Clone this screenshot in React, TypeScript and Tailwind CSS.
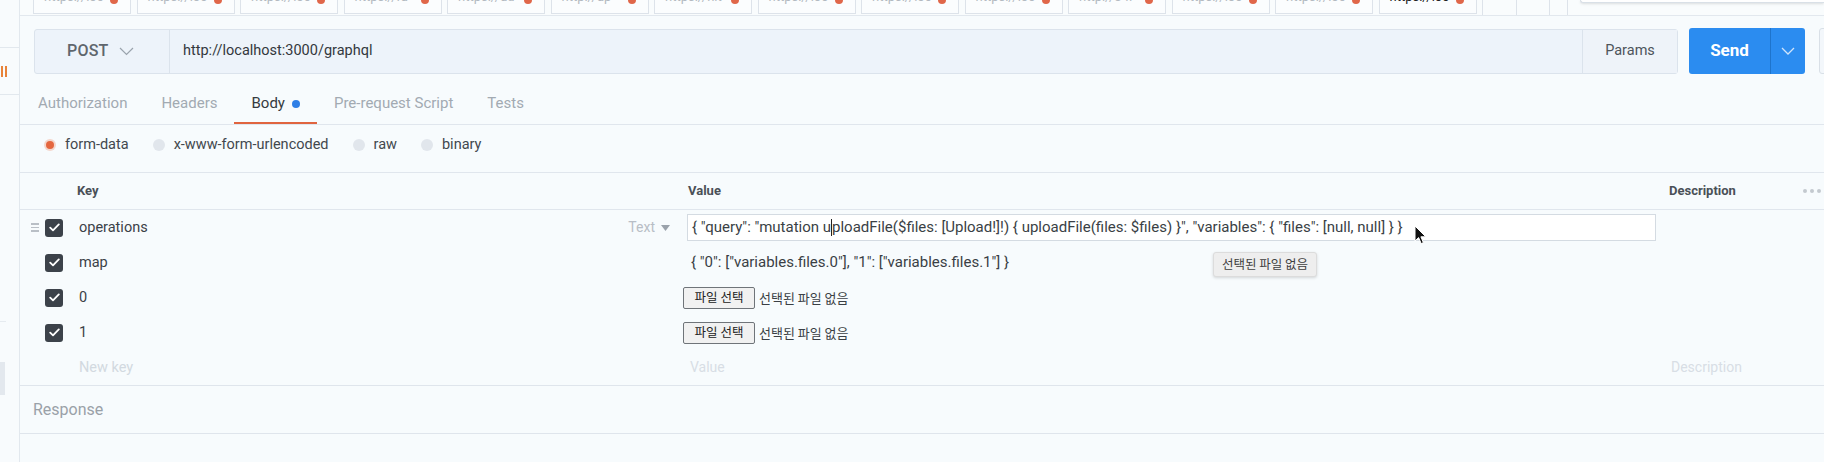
import React from "react";

const tabs = [
  "https://loc",
  "https://loc",
  "https://loc",
  "https://ra",
  "https://ad",
  "http://ap",
  "https://nit",
  "https://loc",
  "https://loc",
  "https://loc",
  "http://34.",
  "https://loc",
  "https://loc",
  "https://loc",
];

function Check() {
  return (
    <div className="w-[18px] h-[18px] rounded-[3px] bg-[#3c424a] flex items-center justify-center shrink-0">
      <svg width="11" height="9" viewBox="0 0 11 9" fill="none">
        <path d="M1.2 4.6 L4 7.4 L9.8 1.4" stroke="#ffffff" strokeWidth="1.8" strokeLinecap="round" strokeLinejoin="round" />
      </svg>
    </div>
  );
}

function FileInput() {
  return (
    <div className="flex items-center text-[12.5px] text-[#3a3f45] font-['Noto_Sans_CJK_KR','Roboto',sans-serif]">
      <div className="h-[22px] w-[72px] border border-[#6f7479] rounded-[2px] bg-[#f1f1f1] flex items-center justify-center text-[#222]">
        파일 선택
      </div>
      <span className="ml-[4px] text-[13px]">선택된 파일 없음</span>
    </div>
  );
}

function Row({
  k,
  value,
  handle,
  checked = true,
  placeholder = false,
  typeLabel = false,
}: {
  k: string;
  value: React.ReactNode;
  handle?: boolean;
  checked?: boolean;
  placeholder?: boolean;
  typeLabel?: boolean;
}) {
  return (
    <div className="grid grid-cols-[663px_977px_130px_34px] h-[35px] items-center">
      <div className="flex items-center h-full">
        <div className="w-[25px] pl-[11px] flex items-center">
          {handle && (
            <div className="flex flex-col gap-[2px]">
              <div className="w-[8px] h-[1.5px] bg-[#b9bfc6]" />
              <div className="w-[8px] h-[1.5px] bg-[#b9bfc6]" />
              <div className="w-[8px] h-[1.5px] bg-[#b9bfc6]" />
            </div>
          )}
        </div>
        {checked ? <Check /> : <div className="w-[18px] h-[18px]" />}
        <span
          className={
            "ml-[16px] text-[14.5px] " +
            (placeholder ? "text-[#d2d9e0]" : "text-[#3b4147]")
          }
        >
          {k}
        </span>
        {typeLabel && (
          <div className="ml-auto mr-[13px] flex items-center gap-[6px] text-[14px] text-[#b8bec6]">
            <span>Text</span>
            <svg width="9" height="6" viewBox="0 0 9 6">
              <path d="M0 0 H9 L4.5 6 Z" fill="#9aa2ab" />
            </svg>
          </div>
        )}
      </div>
      <div className="h-full flex items-center">{value}</div>
      <div className="h-full flex items-center pl-[11px] text-[14px] text-[#d8dee5]">
        {placeholder ? "Description" : ""}
      </div>
      <div />
    </div>
  );
}

export default function App() {
  return (
    <div className="relative w-[1824px] h-[462px] flex bg-[#f7fbfd] overflow-hidden font-['Roboto','Noto_Sans_CJK_KR',sans-serif]">
      {/* left sidebar */}
      <aside className="w-[20px] shrink-0 border-r border-[#e2e8ee] bg-[#f8fbfd] flex flex-col">
        <div className="h-[48px] border-b border-[#e2e8ee]" />
        <div className="h-[47px] border-b border-[#e2e8ee] flex items-center pl-[1px] gap-[2px]">
          <div className="w-[2px] h-[11px] bg-[#e8833a]" />
          <div className="w-[2px] h-[11px] bg-[#e8833a]" />
        </div>
        <div className="h-[227px] border-b border-[#e6ebf0] w-[6px]" />
        <div className="h-[40px]" />
        <div className="h-[33px] w-[5px] bg-[#e3e8ee]" />
      </aside>

      <main className="flex-1 flex flex-col min-w-0">
        {/* request tab strip */}
        <div className="h-[16px] shrink-0 border-b border-[#e2e8ee] flex items-start pl-[13px] bg-[#f9fcfd]">
          <div className="flex gap-[5.5px] items-start shrink-0">
            {tabs.map((t, i) => (
              <div
                key={i}
                className="w-[98px] h-[14px] shrink-0 border-x border-b border-[#dde3ea] bg-[#fbfdfe] flex items-start overflow-hidden pl-[10px]"
              >
                <span
                  className={
                    "mt-[-11px] text-[13px] leading-[16px] " +
                    (i === tabs.length - 1 ? "text-[#222]" : "text-[#b3bac1]")
                  }
                >
                  {t}
                </span>
                <div className="ml-auto mr-[12px] mt-[-4px] w-[8px] h-[8px] rounded-full bg-[#e0674a]" />
              </div>
            ))}
          </div>
          <div className="ml-[5px] w-[35px] h-[15px] shrink-0 border-x border-[#dde3ea]" />
          <div className="w-[33px] h-[15px] shrink-0 border-r border-[#dde3ea]" />
          <div className="w-[18px] h-[15px] shrink-0 border-r border-[#dde3ea]" />
          <div className="ml-[12px] flex-1 h-[3px] border-b border-l border-[#d9e0e7] rounded-bl-[3px] bg-white shadow-sm" />
        </div>

        {/* URL row */}
        <div className="flex items-center pt-[12px] pl-[14px]">
          <div className="w-[1644px] shrink-0 h-[45px] flex border border-[#dbe3ec] rounded-[3px] bg-[#edf3fa]">
            <div className="w-[135px] border-r border-[#dbe3ec] flex items-center pl-[32px] gap-[11px]">
              <span className="text-[16px] font-medium text-[#5f666d] tracking-[0.2px]">POST</span>
              <svg width="15" height="9" viewBox="0 0 15 9" fill="none">
                <path d="M1 1 L7.5 7.5 L14 1" stroke="#9aa3ad" strokeWidth="1.2" />
              </svg>
            </div>
            <div className="flex-1 flex items-center pl-[13px] text-[14.5px] text-[#33383d]">
              http://localhost:3000/graphql
            </div>
            <div className="w-[95px] border-l border-[#dbe3ec] flex items-center justify-center text-[14.5px] text-[#4d545b] bg-[#eef3f9]">
              Params
            </div>
          </div>
          <div className="ml-[11px] w-[116px] shrink-0 h-[46px] rounded-[3px] bg-[#2b8cf0] flex">
            <div className="w-[81px] flex items-center justify-center text-[17px] font-bold text-white">
              Send
            </div>
            <div className="flex-1 border-l border-[#1e74cc] flex items-center justify-center">
              <svg width="14" height="8" viewBox="0 0 14 8" fill="none">
                <path d="M1 1 L7 7 L13 1" stroke="#cfe4fb" strokeWidth="1.3" />
              </svg>
            </div>
          </div>
          <div className="ml-[14px] w-[40px] shrink-0 h-[46px] border border-[#d9e0e7] rounded-[3px] bg-[#f3f7fb]" />
        </div>

        {/* request tabs */}
        <div className="h-[51px] border-b border-[#e0e6ed] flex items-stretch pl-[1px]">
          {[
            { l: "Authorization" },
            { l: "Headers" },
            { l: "Body", active: true },
            { l: "Pre-request Script" },
            { l: "Tests" },
          ].map((t) => (
            <div
              key={t.l}
              className={
                "px-[17px] pt-[11px] flex items-center gap-[7px] text-[15px] border-b-[2px] " +
                (t.active ? "border-[#e0643f] text-[#353a40]" : "border-transparent text-[#a2aab2]")
              }
            >
              <span>{t.l}</span>
              {t.active && <div className="w-[8px] h-[8px] rounded-full bg-[#2f7fe6]" />}
            </div>
          ))}
        </div>

        {/* body type radios */}
        <div className="h-[47px] flex items-center pb-[7px] pl-[24px] text-[14.5px] text-[#42484e]">
          {[
            { l: "form-data", on: true },
            { l: "x-www-form-urlencoded" },
            { l: "raw" },
            { l: "binary" },
          ].map((r) => (
            <div key={r.l} className="flex items-center mr-[24px]">
              <div
                className={
                  "w-[12px] h-[12px] rounded-full flex items-center justify-center " +
                  (r.on ? "bg-[#f3d6cc]" : "bg-[#e1e6ec]")
                }
              >
                {r.on && <div className="w-[8px] h-[8px] rounded-full bg-[#e4663f]" />}
              </div>
              <span className="ml-[9px]">{r.l}</span>
            </div>
          ))}
        </div>

        {/* table header */}
        <div className="grid grid-cols-[663px_977px_130px_34px] h-[38px] border-y border-[#e0e6ed] items-center text-[13px] font-bold text-[#4a5057]">
          <div className="pl-[57px]">Key</div>
          <div className="pl-[5px]">Value</div>
          <div className="pl-[9px]">Description</div>
          <div className="pl-[13px] flex gap-[3px]">
            <div className="w-[4px] h-[4px] rounded-full bg-[#c3c9cf]" />
            <div className="w-[4px] h-[4px] rounded-full bg-[#c3c9cf]" />
            <div className="w-[4px] h-[4px] rounded-full bg-[#c3c9cf]" />
          </div>
        </div>

        {/* rows */}
        <Row
          k="operations"
          handle
          typeLabel
          value={
            <div className="ml-[4px] w-[969px] h-[27px] border border-[#d4dbe2] bg-white flex items-center pl-[4px] text-[15px] text-[#3a3f45] whitespace-nowrap">
              {'{ "query": "mutation u'}
              <span className="inline-block w-[1px] h-[17px] bg-[#222]" />
              {'ploadFile($files: [Upload!]!) { uploadFile(files: $files) }", "variables": { "files": [null, null] } }'}
            </div>
          }
        />
        <Row
          k="map"
          value={
            <div className="pl-[8px] text-[15px] text-[#3a3f45] whitespace-nowrap">
              {'{ "0": ["variables.files.0"], "1": ["variables.files.1"] }'}
            </div>
          }
        />
        <Row k="0" value={<FileInput />} />
        <Row k="1" value={<FileInput />} />
        <Row
          k="New key"
          checked={false}
          placeholder
          value={<div className="pl-[7px] text-[14px] text-[#d8dee5]">Value</div>}
        />

        {/* response */}
        <div className="h-[49px] border-y border-[#dfe5ec] flex items-center pl-[13px] text-[16px] text-[#9aa1a8]">
          Response
        </div>
      </main>

      {/* tooltip over the table */}
      <div className="absolute left-[1213px] top-[252px] h-[25px] px-[8px] flex items-center rounded-[3px] bg-[#eeeeee] border border-[#dcdcdc] shadow-[0_1px_3px_rgba(0,0,0,0.15)] text-[12.5px] text-[#3f3f3f] font-['Noto_Sans_CJK_KR',sans-serif]">
        선택된 파일 없음
      </div>

      {/* mouse pointer */}
      <svg
        className="absolute left-[1414px] top-[225px]"
        width="13"
        height="20"
        viewBox="0 0 13 20"
      >
        <path
          d="M1 1 L1 16 L4.6 12.6 L7.2 18.6 L9.4 17.6 L6.9 11.8 L11.8 11.8 Z"
          fill="#111"
          stroke="#fff"
          strokeWidth="1"
          strokeLinejoin="round"
        />
      </svg>
    </div>
  );
}
